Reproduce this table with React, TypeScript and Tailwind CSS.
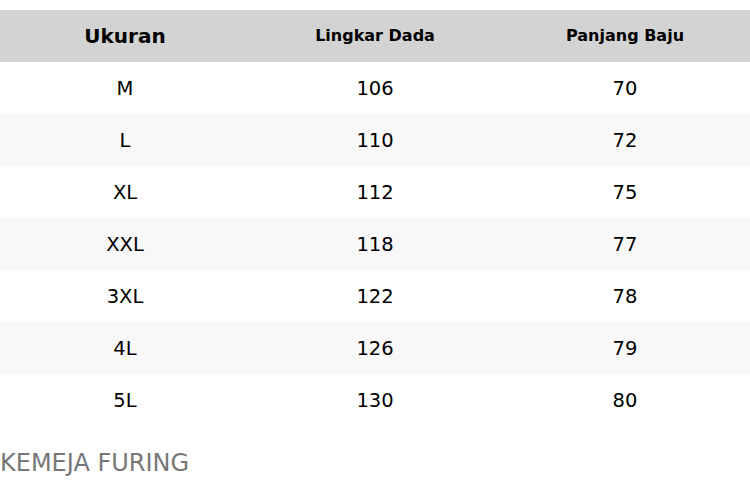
const rows = [
  ["M", "106", "70"],
  ["L", "110", "72"],
  ["XL", "112", "75"],
  ["XXL", "118", "77"],
  ["3XL", "122", "78"],
  ["4L", "126", "79"],
  ["5L", "130", "80"],
]

export default function App() {
  return (
    <div className="w-[750px] h-[498px] bg-white font-['DejaVu_Sans',sans-serif] text-black overflow-hidden">
      <table className="w-full mt-[10px] border-collapse table-fixed">
        <thead>
          <tr className="bg-[#d3d3d3] h-[52px]">
            <th className="w-1/3 text-[20px] font-bold text-center">Ukuran</th>
            <th className="w-1/3 text-[16px] font-bold text-center">Lingkar Dada</th>
            <th className="w-1/3 text-[16px] font-bold text-center">Panjang Baju</th>
          </tr>
        </thead>
        <tbody>
          {rows.map((r, i) => (
            <tr key={r[0]} className={`h-[52px] ${i % 2 === 1 ? "bg-[#f8f8f8]" : "bg-white"}`}>
              {r.map((c, j) => (
                <td key={j} className="text-center text-[19.5px] pt-[2px]">
                  {c}
                </td>
              ))}
            </tr>
          ))}
        </tbody>
      </table>
      <p className="mt-[19px] text-[24px] leading-[36px] text-[#777777]">KEMEJA FURING</p>
    </div>
  )
}
